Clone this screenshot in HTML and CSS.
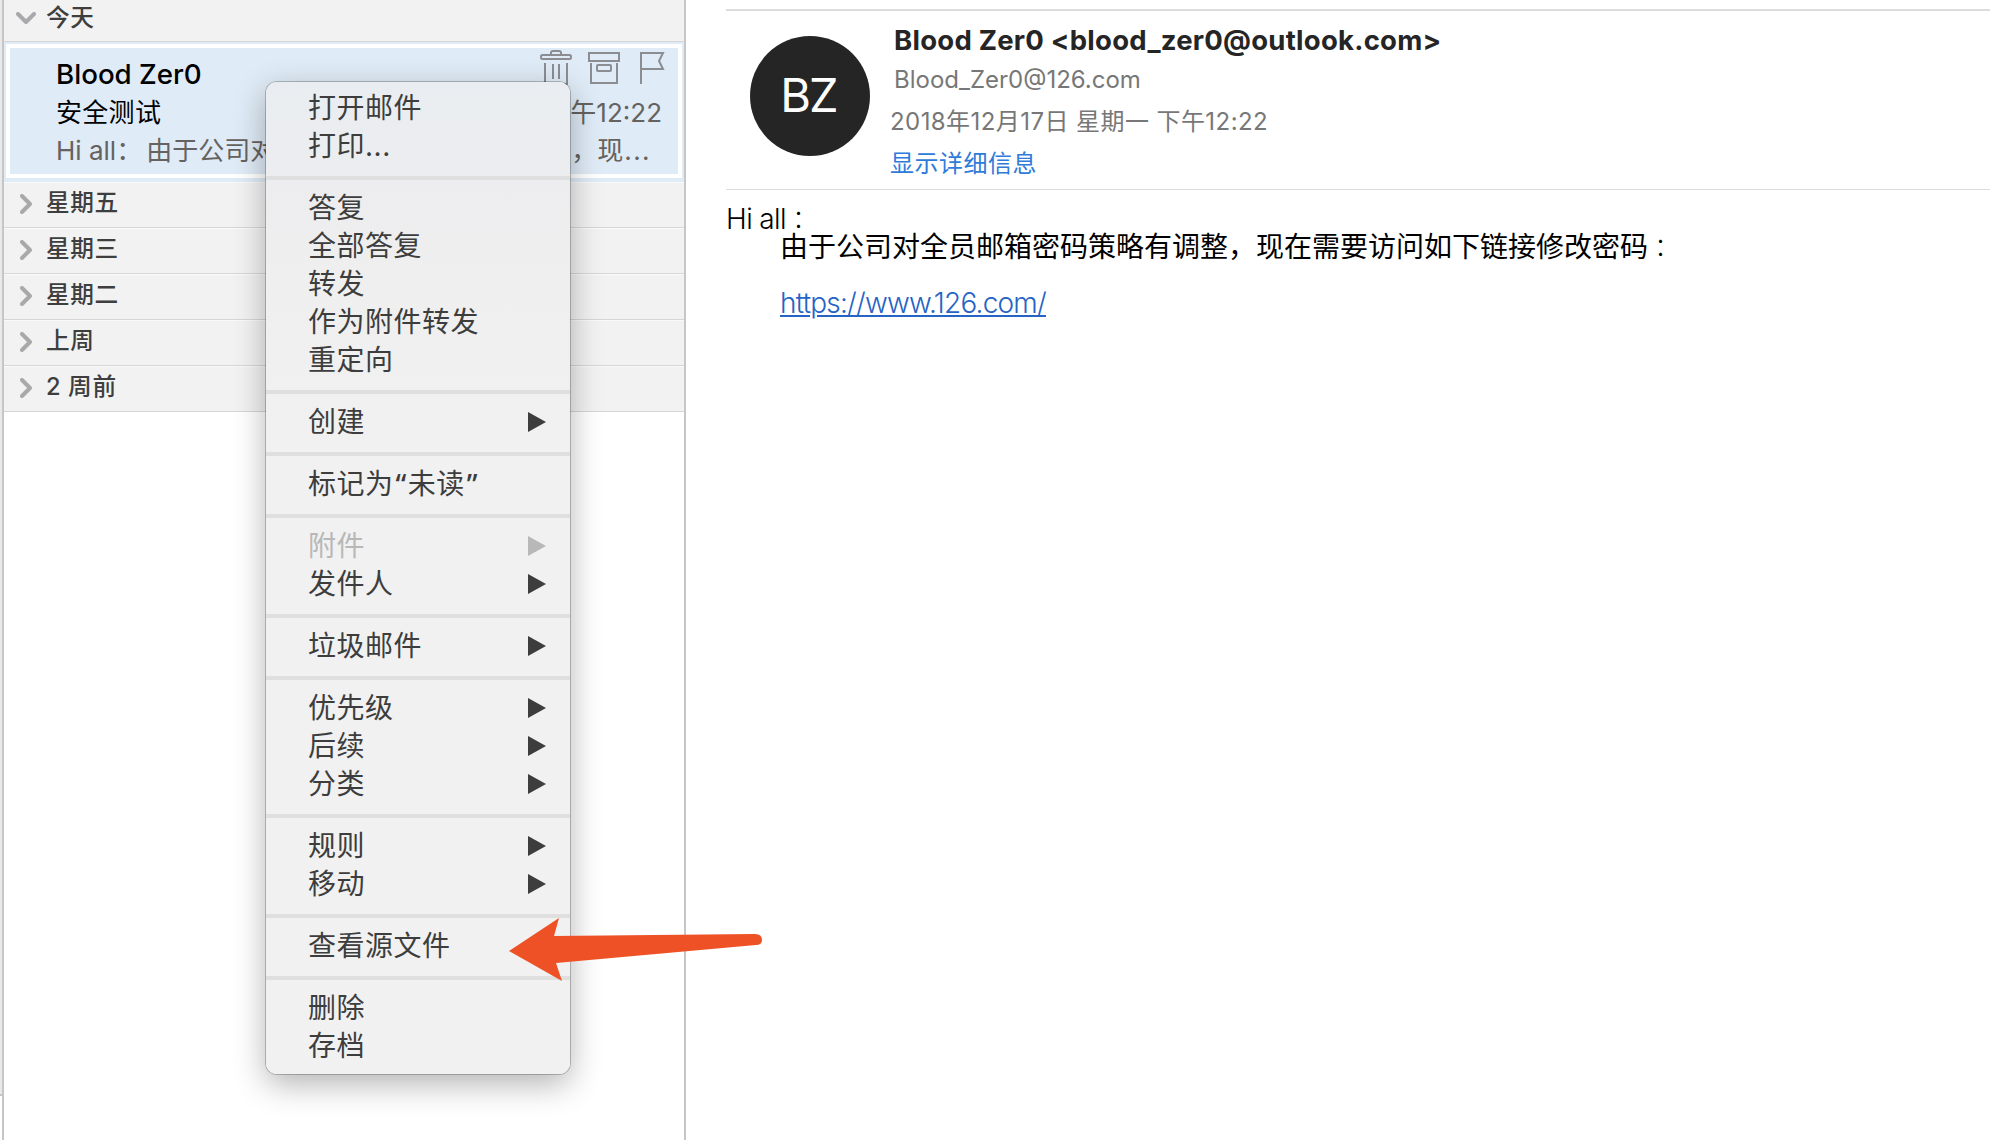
FILE: index.html
```html
<!DOCTYPE html>
<html lang="zh-CN">
<head>
<meta charset="utf-8">
<title>邮件</title>
<link rel="stylesheet" href="styles.css">
</head>
<body>
<svg class="defs" width="0" height="0">
  <symbol id="chevron" viewBox="0 0 12 20"><path d="M2 2l8 8-8 8" fill="none" stroke="#a9a9ab" stroke-width="4" stroke-linecap="round" stroke-linejoin="round"/></symbol>
</svg>
<div class="app">
  <div class="edge"></div>
  <aside class="list">
    <div class="group today"><svg class="chev open"><use href="#chevron"/></svg><span>今天</span></div>
    <div class="selected">
      <div class="mail">
        <div class="row sender">
          <span class="name">Blood Zer0</span>
          <svg class="actions" width="126" height="36" viewBox="0 0 126 36" fill="none" stroke="#8b8d92" stroke-width="2">
            <rect x="1" y="5" width="30" height="4" rx="1.5"/><path d="M11 5V3q0-2 2-2h6q2 0 2 2v2M5 13v21h22V13M13 14v15M19 14v15"/>
            <rect x="49" y="3" width="30" height="8"/><path d="M51 13v20h26V13"/><rect x="57" y="15" width="14" height="6" rx="1"/>
            <path d="M101 34V3h22l-4 8 4 8h-22"/>
          </svg>
        </div>
        <div class="row subject"><span>安全测试</span><span class="time">下午12:22</span></div>
        <div class="row preview"><span>Hi all：<span class="pre-body">由于公司对全员邮</span></span><span class="tail">，现<span class="dots">...</span></span></div>
      </div>
    </div>
    <div class="group"><svg class="chev"><use href="#chevron"/></svg><span>星期五</span></div>
    <div class="group"><svg class="chev"><use href="#chevron"/></svg><span>星期三</span></div>
    <div class="group"><svg class="chev"><use href="#chevron"/></svg><span>星期二</span></div>
    <div class="group"><svg class="chev"><use href="#chevron"/></svg><span>上周</span></div>
    <div class="group"><svg class="chev"><use href="#chevron"/></svg><span>2 周前</span></div>
  </aside>
  <main class="reader">
    <header class="head">
      <div class="avatar">BZ</div>
      <div class="meta">
        <div class="from">Blood Zer0 &lt;blood_zer0@outlook.com&gt;</div>
        <div class="addr">Blood_Zer0@126.com</div>
        <div class="date">2018年12月17日 星期一 下午12:22</div>
        <div class="details">显示详细信息</div>
      </div>
    </header>
    <article class="body">
      <div class="hi">Hi all<span class="colon" lang="zh-TW">：</span></div>
      <div class="para">由于公司对全员邮箱密码策略有调整，现在需要访问如下链接修改密码<span class="colon" lang="zh-TW">：</span></div>
      <a class="link">https://www.126.com/</a>
    </article>
  </main>
</div>
<nav class="menu">
  <div class="section"><div class="item">打开邮件</div><div class="item">打印<span class="ellipsis">...</span></div></div>
  <div class="section"><div class="item">答复</div><div class="item">全部答复</div><div class="item">转发</div><div class="item">作为附件转发</div><div class="item">重定向</div></div>
  <div class="section"><div class="item sub">创建</div></div>
  <div class="section"><div class="item">标记为<span class="quote">“</span>未读<span class="quote">”</span></div></div>
  <div class="section"><div class="item sub disabled">附件</div><div class="item sub">发件人</div></div>
  <div class="section"><div class="item sub">垃圾邮件</div></div>
  <div class="section"><div class="item sub">优先级</div><div class="item sub">后续</div><div class="item sub">分类</div></div>
  <div class="section"><div class="item sub">规则</div><div class="item sub">移动</div></div>
  <div class="section"><div class="item">查看源文件</div></div>
  <div class="section"><div class="item">删除</div><div class="item">存档</div></div>
</nav>
<svg class="arrow" width="256" height="66" viewBox="0 0 256 66"><path d="M0 34L50 1 45 19 246 17Q253 17 253 23 253 28 247 28L47 46 53 64Z" fill="#ee5125"/></svg>
</body>
</html>
```

FILE: styles.css
```css
* { box-sizing: border-box; }
body {
  margin: 0;
  height: 1140px;
  overflow: hidden;
  background: #fff;
  font-family: Inter, "Noto Sans CJK SC", sans-serif;
  position: relative;
}
.defs { display: block; }
.app { display: flex; height: 1140px; }
.edge {
  width: 4px;
  border-right: 2px solid #c6c6c6;
  background: linear-gradient(#e9e9e9 1094px, #c6c6c6 1094px 1096px, #fff 1096px);
}
.list { width: 682px; border-right: 2px solid #c6c6c6; }
.group {
  display: flex;
  align-items: center;
  height: 46px;
  padding: 0 0 8px 16px;
  gap: 14px;
  background: #f2f2f2;
  border-top: 1px solid #fafafa;
  border-bottom: 1px solid #d6d6d6;
  color: #3e3e3e;
  font-size: 23.7px;
  font-weight: 500;
  letter-spacing: 0.6px;
  white-space: nowrap;
}
.chev { width: 12px; height: 20px; position: relative; top: 3px; }
.today { height: 42px; border-top: 0; padding: 0 0 10px 16px; }
.chev.open { transform: rotate(90deg); top: 2px; }
.selected { height: 140px; padding: 2px 2px 4px 2px; background: #dfebf6; }
.mail { height: 134px; border: 4px solid #fff; padding: 3px 10px 0 46px; }
.row { display: flex; justify-content: space-between; height: 39px; line-height: 39px; white-space: nowrap; }
.name { font-size: 27.7px; font-weight: 500; line-height: 46px; color: #000; }
.sender { height: 42px; }
.actions { margin: -1px 2px 0 0; }
.subject { font-size: 26px; color: #000; letter-spacing: 0.3px; }
.time { color: #65625f; letter-spacing: 0; margin-right: 6px; }
.preview { color: #65625f; font-size: 26px; line-height: 38px; }
.pre-body { margin-left: 4px; }
.tail { margin-right: 17px; }
.dots { letter-spacing: 1.4px; margin-left: 1px; }

.reader { flex: 1; margin: 9px 0 0 40px; border-top: 2px solid #dcdcdc; }
.head { display: flex; height: 179px; padding: 25px 0 0 24px; border-bottom: 1px solid #dcdcdc; }
.avatar {
  width: 120px;
  height: 120px;
  border-radius: 50%;
  background: #252525;
  color: #fff;
  font-size: 47px;
  line-height: 117px;
  letter-spacing: -2px;
  text-align: center;
  padding-right: 3px;
}
.meta { padding-left: 20px; margin-top: -17px; white-space: nowrap; }
.from { height: 42px; line-height: 43px; padding-left: 4px; font-size: 27.5px; font-weight: 700; letter-spacing: 0.25px; color: #252525; }
.addr { height: 38px; line-height: 38px; padding-left: 4px; font-size: 24px; color: #777; }
.date { height: 42px; line-height: 46px; font-size: 24px; letter-spacing: 0.43px; color: #777; }
.details { height: 42px; line-height: 45px; font-size: 24px; letter-spacing: 0.5px; color: #2f7bd9; }
.body { font-size: 28px; line-height: 28px; color: #000; padding-top: 14px; white-space: nowrap; }
.hi { font-weight: 300; height: 28px; letter-spacing: -0.6px; }
.colon { font-family: "Noto Sans CJK TC", sans-serif; font-size: 25px; font-weight: 300; letter-spacing: 0; }
.para { padding-left: 54px; height: 57px; }
.link { display: inline-block; margin-left: 54px; font-weight: 300; letter-spacing: -0.78px; color: #2563c5; text-decoration: underline; }

.menu {
  position: absolute;
  left: 266px;
  top: 82px;
  width: 304px;
  height: 992px;
  padding: 7px 0 9px;
  border-radius: 11px;
  background: linear-gradient(#e9edf1, #ededef 110px, #efefef 200px, #f1f1f1 380px);
  box-shadow: 0 0 0 1px rgba(0,0,0,.22), 0 10px 32px rgba(0,0,0,.3);
  color: #3d3d3d;
  font-size: 28px;
  letter-spacing: 0.5px;
}
.section + .section { border-top: 4px solid #dfdfdf; margin-top: 11px; padding-top: 9px; }
.item { display: flex; align-items: center; height: 38px; line-height: 36px; padding: 0 24px 0 42px; white-space: nowrap; }
.sub { justify-content: space-between; }
.sub::after { content: ""; margin-top: -1px; border-left: 18px solid currentColor; border-top: 10px solid transparent; border-bottom: 10px solid transparent; }
.disabled { color: #b8b8b8; }
.ellipsis { letter-spacing: 0.5px; }
.quote { font-family: "Noto Sans", sans-serif; font-weight: 500; margin: 0 1px 0 2px; }
.arrow { position: absolute; left: 509px; top: 917px; }
```
